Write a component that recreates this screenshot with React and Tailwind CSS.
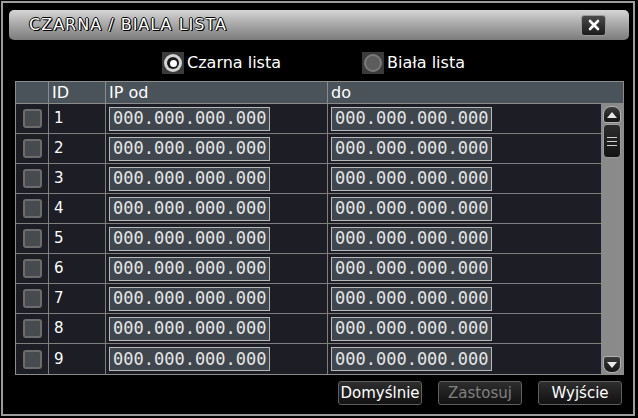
import React from "react";

const ROWS = [1, 2, 3, 4, 5, 6, 7, 8, 9];
const UI = { fontFamily: '"DejaVu Sans", "Liberation Sans", sans-serif' };
const MONO = { fontFamily: '"DejaVu Sans Mono", "Liberation Mono", monospace' };

function Radio({ checked }) {
  return (
    <div className="w-[22px] h-[22px] bg-[#3b3b3b] flex items-center justify-center">
      {checked ? (
        <div className="w-[18px] h-[18px] rounded-full bg-[#d4d4d4] flex items-center justify-center">
          <div className="w-[12px] h-[12px] rounded-full bg-[#1a1a1a] flex items-center justify-center">
            <div className="w-[7px] h-[7px] rounded-full bg-white" />
          </div>
        </div>
      ) : (
        <div className="w-[18px] h-[18px] rounded-full bg-[#5c5c5c] border-2 border-[#7a7a7a]" />
      )}
    </div>
  );
}

function IpBox() {
  return (
    <div
      className="w-[161px] h-[24px] bg-[#3f464d] border border-[#b8b8b8] flex items-center pl-[3px] text-[17px] leading-none text-[#e6e6e6]"
      style={MONO}
    >
      000.000.000.000
    </div>
  );
}

function Btn({ children, disabled }) {
  return (
    <div
      className={`w-[84px] h-[24px] rounded-[3px] border border-[#5e5e5e] bg-gradient-to-b from-[#2e2e2e] to-[#121212] flex items-center justify-center text-[15px] ${
        disabled ? "text-[#808080]" : "text-white"
      }`}
    >
      {children}
    </div>
  );
}

export default function App() {
  return (
    <div className="w-[638px] h-[418px] bg-black p-px" style={UI}>
      <div className="w-[634px] h-[415px] border-2 border-[#9c9c9c] bg-black flex flex-col">
        {/* Title */}
        <div className="ml-[6px] mt-[7px] w-[620px] h-[30px] rounded-[5px] bg-gradient-to-b from-[#d6d6d6] via-[#a6a6a6] to-[#7c7c7c] flex items-center justify-between pl-[20px] pr-[23px]">
          <span
            className="text-[16px] tracking-[1px] text-white"
            style={{ textShadow: "1px 1px 0 #000, -1px 0 0 #000, 0 -1px 0 #000, 1px 0 0 #000" }}
          >
            CZARNA / BIALA LISTA
          </span>
          <div className="w-[25px] h-[21px] rounded-[3px] bg-gradient-to-b from-[#4a4a4a] to-[#1c1c1c] border border-[#9a9a9a] flex items-center justify-center">
            <svg width="12" height="12" viewBox="0 0 12 12">
              <path d="M2 2 L10 10 M10 2 L2 10" stroke="white" strokeWidth="2.6" strokeLinecap="round" />
            </svg>
          </div>
        </div>

        {/* Radios */}
        <div className="mt-[12px] flex items-center h-[22px] pl-[159px] text-[16px] text-white">
          <div className="flex items-center gap-[3px] w-[200px]">
            <Radio checked />
            <span>Czarna lista</span>
          </div>
          <div className="flex items-center gap-[3px]">
            <Radio />
            <span>Biała lista</span>
          </div>
        </div>

        {/* Table */}
        <div className="mt-[7px] ml-[12px] w-[609px] border border-[#8c8c8c]">
          <div className="grid grid-cols-[33px_57px_222px_273px_22px] h-[22px] bg-[#4b535a] border-b border-[#8c8c8c] text-[16px] text-white leading-none">
            <div className="border-r border-[#8c8c8c]" />
            <div className="border-r border-[#8c8c8c] flex items-center pl-[3px]">ID</div>
            <div className="border-r border-[#8c8c8c] flex items-center pl-[3px]">IP od</div>
            <div className="flex items-center pl-[3px]">do</div>
            <div />
          </div>
          <div className="flex">
            <div className="w-[585px]">
              {ROWS.map((n) => (
                <div
                  key={n}
                  className="grid grid-cols-[33px_57px_222px_273px] h-[30px] bg-[#1d1e25] border-b border-[#7e7e7e] last:border-b-0"
                >
                  <div className="border-r border-[#7e7e7e] flex items-center justify-center">
                    <div className="w-[19px] h-[19px] rounded-[3px] bg-[#474b4f] border-2 border-[#6c6c6c]" />
                  </div>
                  <div className="border-r border-[#7e7e7e] flex items-center pl-[5px] text-[15px] text-white">
                    {n}
                  </div>
                  <div className="border-r border-[#7e7e7e] flex items-center pl-[3px]">
                    <IpBox />
                  </div>
                  <div className="flex items-center pl-[3px]">
                    <IpBox />
                  </div>
                </div>
              ))}
            </div>
            {/* Scrollbar */}
            <div className="w-[22px] bg-[#8a8a8a] flex flex-col items-center pt-[2px] pb-[1px]">
              <div className="w-[18px] h-[17px] rounded-t-[8px] rounded-b-[3px] bg-gradient-to-b from-[#3c3c3c] to-[#151515] border border-[#b0b0b0] flex items-center justify-center">
                <svg width="10" height="6" viewBox="0 0 10 6">
                  <path d="M5 0 L10 6 L0 6 Z" fill="#e8e8e8" />
                </svg>
              </div>
              <div className="mt-[1px] w-[18px] h-[34px] rounded-[4px] bg-gradient-to-b from-[#2c2c2c] to-[#141414] border border-[#9a9a9a] flex flex-col items-center justify-center gap-[3px]">
                <div className="w-[10px] h-px bg-[#d0d0d0]" />
                <div className="w-[10px] h-px bg-[#d0d0d0]" />
                <div className="w-[10px] h-px bg-[#d0d0d0]" />
              </div>
              <div className="flex-1" />
              <div className="w-[18px] h-[17px] rounded-b-[8px] rounded-t-[3px] bg-gradient-to-b from-[#3c3c3c] to-[#151515] border border-[#b0b0b0] flex items-center justify-center">
                <svg width="10" height="6" viewBox="0 0 10 6">
                  <path d="M0 0 L10 0 L5 6 Z" fill="#e8e8e8" />
                </svg>
              </div>
            </div>
          </div>
        </div>

        {/* Buttons */}
        <div className="mt-[6px] flex justify-end gap-[16px] pr-[11px]">
          <Btn>Domyślnie</Btn>
          <Btn disabled>Zastosuj</Btn>
          <Btn>Wyjście</Btn>
        </div>
      </div>
    </div>
  );
}
